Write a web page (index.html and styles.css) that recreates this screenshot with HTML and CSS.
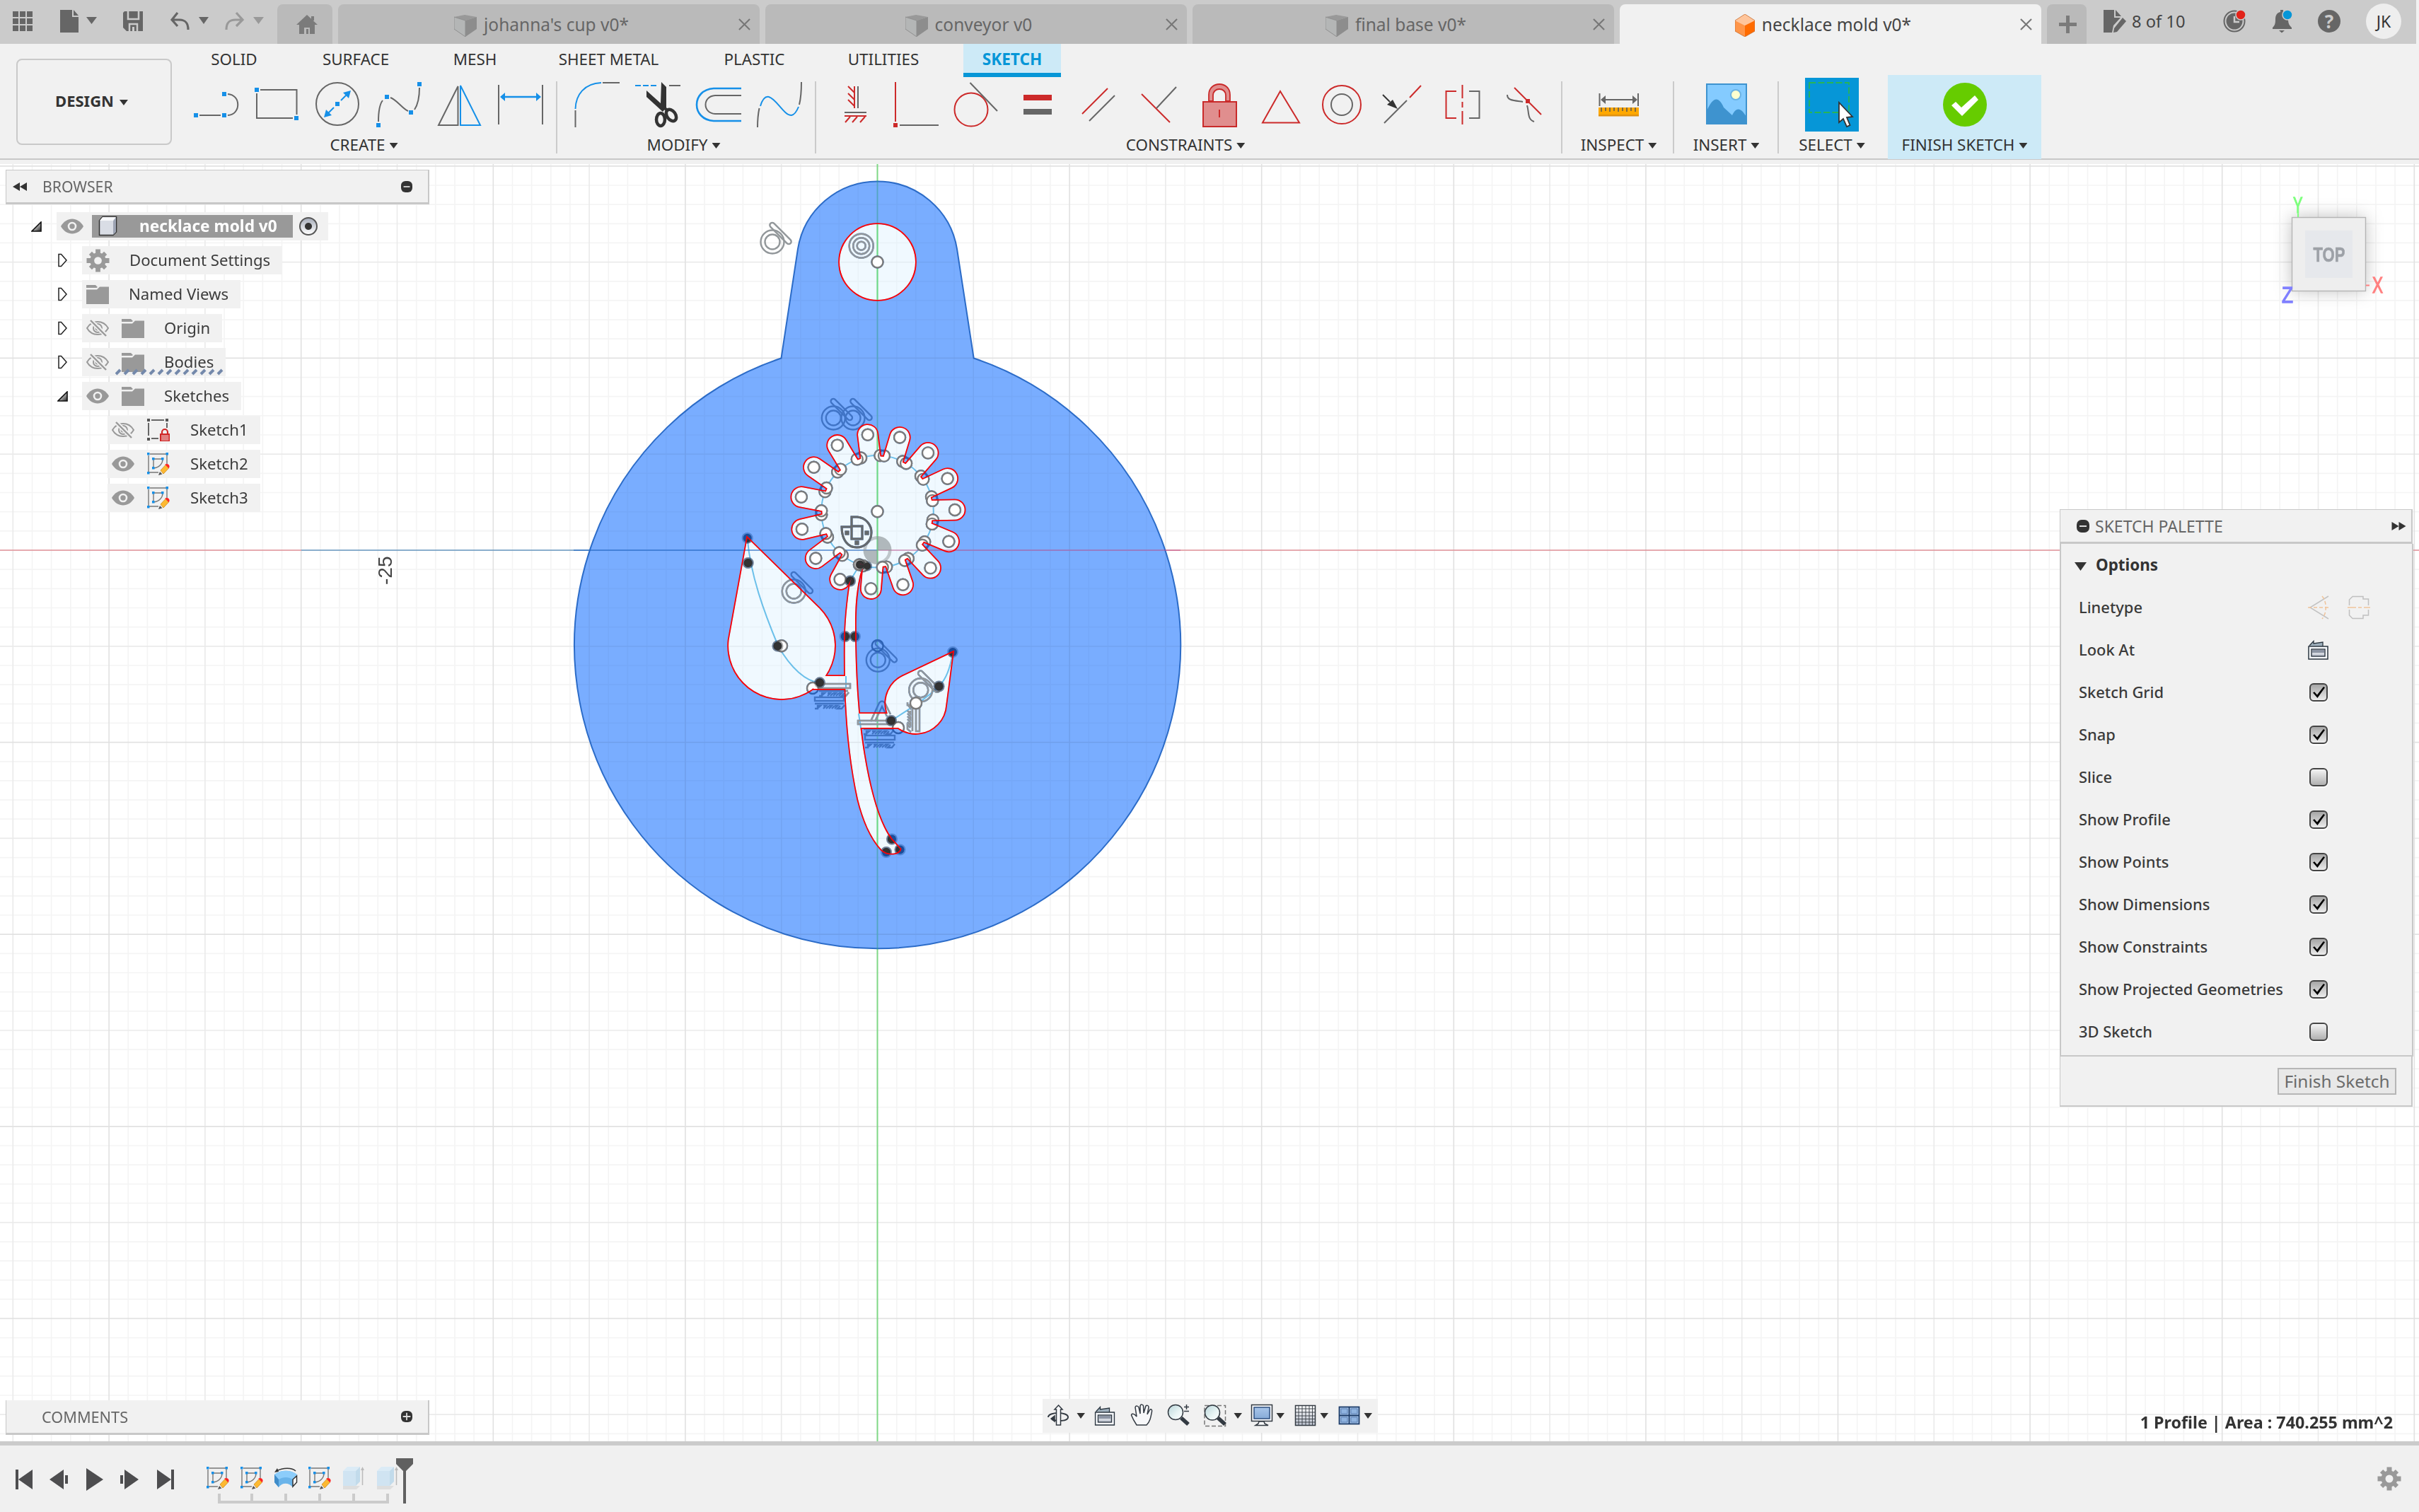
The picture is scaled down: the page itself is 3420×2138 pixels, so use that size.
FILE: index.html
```html
<!DOCTYPE html>
<html lang="en">
<head>
<meta charset="utf-8">
<title>necklace mold v0*</title>
<link rel="stylesheet" href="styles.css">
</head>
<body>
<svg class="defs" width="0" height="0" aria-hidden="true">
  <defs>
    <linearGradient id="gBox" x1="0" y1="0" x2="0" y2="1"><stop offset="0" stop-color="#fff"/><stop offset="1" stop-color="#b9bfcc"/></linearGradient>
    <linearGradient id="gTri" x1="0" y1="0" x2="1" y2="1"><stop offset=".3" stop-color="#eee"/><stop offset="1" stop-color="#222"/></linearGradient>
    <linearGradient id="gLens" x1="0" y1="0" x2="1" y2="1"><stop offset="0" stop-color="#b9d6da"/><stop offset=".6" stop-color="#eaf5f5"/><stop offset="1" stop-color="#fff"/></linearGradient>
    <linearGradient id="gBlue" x1="0" y1="0" x2="0" y2="1"><stop offset="0" stop-color="#a9c6ea"/><stop offset="1" stop-color="#86abd8"/></linearGradient>
    <symbol id="eye" viewBox="0 0 32 22"><path d="M0 11C8-3 24-3 32 11C24 25 8 25 0 11Z" fill="#999"/><circle cx="16" cy="11" r="5" fill="none" stroke="#f1f1f1" stroke-width="2.6"/></symbol>
    <symbol id="eye-off" viewBox="0 0 32 26"><g fill="none" stroke="#999" stroke-width="2"><path d="M1 13C8 1 24 1 31 13C24 25 8 25 1 13Z"/><circle cx="16" cy="13" r="6"/><circle cx="16" cy="13" r="2.5"/></g><path d="M5.5 1.500L29 24.500" stroke="#f1f1f1" stroke-width="6"/><path d="M6 2L28 24" stroke="#999" stroke-width="2.4"/></symbol>
    <symbol id="folder" viewBox="0 0 32 27"><path d="M0 0H13L16 3L14.500 4H0ZM0 6.500H15L19 2.500H32V27H0Z" fill="#999"/></symbol>
    <symbol id="gear" viewBox="-17 -17 34 34"><g fill="#999"><path d="M-3.500-16.500H3.500V16.500H-3.500Z"/><path d="M-3-15.500H3V15.500H-3Z" transform="rotate(45)"/><path d="M-3.500-16.500H3.500V16.500H-3.500Z" transform="rotate(90)"/><path d="M-3-15.500H3V15.500H-3Z" transform="rotate(135)"/><circle r="11.5"/></g><circle r="5.5" fill="#f1f1f1"/></symbol>
    <symbol id="sketch" viewBox="0 0 32 32"><g fill="none" stroke="#777" stroke-width="1.4"><path d="M2 4V28H16M4 2H28V16"/><path d="M9 10V22C17 21 22 16 22 9H9"/></g><g fill="#1690e8"><path d="M0 0h3.500v3.500H0zM26.500 0h3.500v3.500h-3.500zM0 27h3.500v3.500H0zM7 7h3.500v3.500H7zM20 7h3.500v3.500h-3.500zM7 20h3.500v3.500H7z"/></g><path d="M19 25L26 17.500L30.500 22L23 30Z" fill="#fdb931" stroke="#d89a30"/><path d="M26.500 17a3 3 0 0 1 4 4z" fill="#f22" stroke="#f22" stroke-width="1.500"/><path d="M18 27L16 32L21.500 30.500Z" fill="#555"/></symbol>
    <symbol id="sketch-lock" viewBox="0 0 32 32"><g stroke="#666" stroke-width="2"><path d="M6 2H24M2 6V24M28 6V13M6 28H16"/></g><path d="M0 0h4v4H0zM26 0h4v4h-4zM0 27h4v4H0z" fill="#555"/><path d="M21 21V19a4 4 0 0 1 8 0V21" fill="none" stroke="#d02626" stroke-width="2.200"/><path d="M19 22H31.500V32H19Z" fill="#e08080" stroke="#d02626" stroke-width="2"/></symbol>
    <symbol id="part" viewBox="0 0 32 31"><path d="M0 3L15 0L32 3L16 8Z" fill="#999"/><path d="M0 3L16 8V31L0 20Z" fill="#b4b6b6" stroke="#8f8f8f"/><path d="M16 8L32 3V20L16 31Z" fill="#8d8d8d"/></symbol>
    <symbol id="part-on" viewBox="0 0 28 32"><path d="M14 0L28 9L14 16L0 9Z" fill="#ffc59b"/><path d="M0 9L14 16V32L0 24Z" fill="#ff9548"/><path d="M28 9L14 16V32L28 24Z" fill="#ff6b00"/><path d="M14 0L28 9V24L14 32L0 24V9Z" fill="none" stroke="#c96a2b" stroke-width=".8"/></symbol>
    <symbol id="close" viewBox="0 0 18 18"><path d="M1 1L17 17M17 1L1 17" stroke="#777" stroke-width="2.200"/></symbol>
    <symbol id="look" viewBox="0 0 29 28"><path d="M2 8L8 1.500V5L21 3V9" fill="#9fb0bd" stroke="#2b3640" stroke-width="1.300"/><rect x="1" y="9" width="27" height="18" fill="#f6f8fb" stroke="#2b3640" stroke-width="1.500"/><rect x="5" y="13" width="19" height="10" fill="url(#gBox)" stroke="#2b3640" stroke-width="1.400"/><rect x="6" y="14" width="17" height="4" fill="#8d95a5"/></symbol>
    <symbol id="tri-open" viewBox="0 0 14 20"><path d="M1.500 1.500H5L12.500 10L5 18.500H1.500Z" fill="#fff" stroke="#222" stroke-width="1.500"/></symbol>
    <symbol id="tri-full" viewBox="0 0 15 15"><path d="M14 1V14H1Z" fill="url(#gTri)" stroke="#111" stroke-width="1.600"/></symbol>
    <symbol id="rew" viewBox="0 0 20 12"><path d="M10 0V12L0 6ZM20 0V12L10 6Z" fill="#333"/></symbol>
    <symbol id="pill" viewBox="0 0 18 18"><rect width="18" height="18" rx="7" fill="#333"/><path d="M4 9H14" stroke="#ddd" stroke-width="2"/></symbol>
    <symbol id="pill-plus" viewBox="0 0 18 18"><rect width="18" height="18" rx="7" fill="#333"/><path d="M3 9H15M9 3V15" stroke="#ddd" stroke-width="2"/></symbol>
  </defs>
</svg>

<header class="topbar">
  <div class="quick">
    <svg width="392" height="62" viewBox="0 0 392 62">
      <path d="M18 16h8v8h-8zm10 0h8v8h-8zm10 0h8v8h-8zM18 26h8v8h-8zm10 0h8v8h-8zm10 0h8v8h-8zM18 36h8v8h-8zm10 0h8v8h-8zm10 0h8v8h-8z" fill="#666"/>
      <path d="M85 14H102V24H111V46H85ZM104 14L111 22H104Z" fill="#666"/><path d="M122 24H137L129.500 34Z" fill="#666"/>
      <path d="M176 16H202V44H179L174 39V18Z" fill="#666"/><path d="M181 16V27H196V16M183 44V34H194V44" fill="none" stroke="#cbcbcb" stroke-width="2.500"/><path d="M187 38h3v6h-3z" fill="#cbcbcb"/>
      <path d="M251 18L243 28L251 37M243 28H253C262 28 266 32 266 42" fill="none" stroke="#666" stroke-width="3.200"/><path d="M281 24H295L288 34Z" fill="#666"/>
      <path d="M334 18L343 28L334 37M343 28H333C324 28 320 32 320 42" fill="none" stroke="#999" stroke-width="3.200"/><path d="M358 24H373L365.500 34Z" fill="#999"/>
    </svg>
  </div>
  <div class="tab home"><svg width="32" height="28" viewBox="0 0 32 28"><path d="M16 0L31 14H27V27H20V18H12V27H5V14H1ZM22 2H26V8H22Z" fill="#7b7b7b"/><path d="M15 20h3v7h-3z" fill="#7b7b7b"/></svg></div>
  <div class="tab"><div class="title"><svg width="32" height="31"><use href="#part"/></svg><span>johanna's cup v0*</span></div><svg class="x" width="17" height="17"><use href="#close"/></svg></div>
  <div class="tab"><div class="title"><svg width="32" height="31"><use href="#part"/></svg><span>conveyor v0</span></div><svg class="x" width="17" height="17"><use href="#close"/></svg></div>
  <div class="tab"><div class="title"><svg width="32" height="31"><use href="#part"/></svg><span>final base v0*</span></div><svg class="x" width="17" height="17"><use href="#close"/></svg></div>
  <div class="tab active"><div class="title"><svg width="28" height="32"><use href="#part-on"/></svg><span>necklace mold v0*</span></div><svg class="x" width="17" height="17"><use href="#close"/></svg></div>
  <div class="tab plus"><svg width="25" height="25" viewBox="0 0 25 25"><path d="M10 0h5v10h10v5H15v10h-5V15H0v-5h10z" fill="#7b7b7b"/></svg></div>
  <div class="account">
    <svg width="32" height="32" viewBox="0 0 32 32"><path d="M0 0H15V11H24L14 22L12 32H0ZM17 0L25 9H17Z" fill="#666"/><path d="M27 11L32 16L19 31L14 32L15 26Z" fill="#666"/></svg>
    <span class="count">8 of 10</span>
    <svg class="clock" width="34" height="34" viewBox="0 0 34 34"><circle cx="16" cy="17" r="14.500" fill="none" stroke="#666" stroke-width="2"/><circle cx="16" cy="17" r="11.500" fill="#666"/><path d="M16 10V18H23" fill="none" stroke="#cbcbcb" stroke-width="2.500"/><circle cx="25" cy="8" r="7" fill="#e2231a" stroke="#cbcbcb" stroke-width="1.500"/></svg>
    <svg class="bell" width="30" height="34" viewBox="0 0 30 34"><path d="M12 1H16V4C21 5 23 9 23 14C23 21 25 23 28 26V28H1V26C4 23 5 21 5 14C5 9 7 5 12 4ZM10 30H18L14 33.500Z" fill="#666"/><circle cx="22" cy="8" r="7" fill="#0696d7" stroke="#cbcbcb" stroke-width="1.500"/></svg>
    <div class="help">?</div>
    <div class="avatar">JK</div>
  </div>
</header>

<section class="ribbon">
  <button class="design">DESIGN<i class="caret"></i></button>
  <div class="rib-main">
    <nav class="rib-tabs"><span class="t1">SOLID</span><span class="t2">SURFACE</span><span class="t3">MESH</span><span class="t4">SHEET METAL</span><span class="t5">PLASTIC</span><span class="t6">UTILITIES</span><span class="t7">SKETCH</span></nav>
    <div class="groups">
      <div class="group create">
        <div class="icons">
          <svg width="79" height="76" viewBox="265 110 79 76"><path d="M282 163H312M322 133C341 134 341 162 322 163" class="k"/><path d="M274 160h6v6h-6zM314 160h6v6h-6zM314 130h6v6h-6z" class="bf"/></svg>
          <svg width="86" height="76" viewBox="344 110 86 76"><path d="M368 127H419.500V162M414 167H363V132" class="k"/><path d="M360 124h6v6h-6zM416 164h6v6h-6z" class="bf"/></svg>
          <svg width="88" height="76" viewBox="430 110 88 76"><circle cx="477" cy="147" r="30" class="k"/><path d="M462 162L472 152M482 142L492 132" class="b"/><path d="M496 128L493 139L485 131ZM458 166L461 155L469 163ZM474 144h6v6h-6z" class="bf"/></svg>
          <svg width="88" height="76" viewBox="518 110 88 76"><path d="M535 172C535 158 537 147 541 142M552 138C561 141 569 154 577 157M586 155C592 146 593 136 593 124" class="k"/><path d="M532 174h6v6h-6zM544 134h6v6h-6zM578 156h6v6h-6zM590 116h6v6h-6z" class="bf"/></svg>
          <svg width="86" height="76" viewBox="606 110 86 76"><path d="M647.500 122V177H620Z" class="k"/><path d="M651 121V177H679Z" class="b"/></svg>
          <svg width="90" height="76" viewBox="692 110 90 76"><path d="M705 120V176M767 120V176" class="k"/><path d="M710 137H762" class="b thick"/><path d="M707 137L714 131V143ZM765 137L758 131V143Z" class="bf"/></svg>
        </div>
        <div class="label">CREATE<i class="caret"></i></div>
      </div>
      <i class="sep"></i>
      <div class="group modify">
        <div class="icons">
          <svg width="90" height="76" viewBox="796 110 90 76"><path d="M813.500 180V156M852 117H876" class="k"/><path d="M813.500 154C814 134 826 118 850 117" class="b"/></svg>
          <svg width="88" height="76" viewBox="886 110 88 76"><path d="M898 121h8m3 0h8m3 0h8" class="b"/><path d="M946 121H962" class="k"/><path d="M935 116L942 123V152L937 158L914 137V128L934 146Z" fill="#333"/><g fill="none" stroke="#333" stroke-width="4.500"><ellipse cx="934" cy="169" rx="6" ry="9"/><ellipse cx="949" cy="163" rx="6" ry="9" transform="rotate(-35 949 163)"/></g><path d="M932 148L944 156" stroke="#333" stroke-width="4"/></svg>
          <svg width="86" height="76" viewBox="974 110 86 76"><path d="M1048 125H1009C977 127 977 169 1009 171H1048" class="b thick"/><path d="M1048 135H1011C993 136 993 160 1011 161H1048" class="k"/></svg>
          <svg width="90" height="76" viewBox="1060 110 90 76"><path d="M1071 180C1071 168 1072 160 1073.500 153M1130 148C1132 140 1133 128 1133 116" class="k"/><path d="M1075 150C1078 140 1082 136 1087 137C1098 140 1108 163 1119 163C1124 162 1127 156 1129 151" class="b"/></svg>
        </div>
        <div class="label">MODIFY<i class="caret"></i></div>
      </div>
      <i class="sep"></i>
      <div class="group constraints">
        <div class="icons">
          <svg width="62" height="76" viewBox="1180 110 62 76"><path d="M1214 122V153M1195 159H1226" class="k"/><path d="M1209 122V153M1200 122l9 9M1200 132l9 9M1200 141l9 9M1195 164H1226M1203 165l-7 8M1213 165l-7 8M1224 165l-7 8" class="r"/></svg>
          <svg width="98" height="76" viewBox="1242 110 98 76"><path d="M1267 116V172" class="r"/><path d="M1264 174h6v6h-6z" class="rf"/><path d="M1273 177H1328" class="k"/></svg>
          <svg width="88" height="76" viewBox="1340 110 88 76"><circle cx="1374" cy="155" r="23.500" class="r"/><path d="M1372.500 117L1411 157" class="k"/></svg>
          <svg width="84" height="76" viewBox="1428 110 84 76"><path d="M1448 134h40v8h-40z" class="rf"/><path d="M1448 154h40v8h-40z" fill="#666"/></svg>
          <svg width="84" height="76" viewBox="1512 110 84 76"><path d="M1531 161L1567 125" class="r"/><path d="M1541 171L1577 135" class="k"/></svg>
          <svg width="84" height="76" viewBox="1596 110 84 76"><path d="M1615 133L1655 173" class="r"/><path d="M1636 153L1664 123" class="k"/></svg>
          <svg width="86" height="76" viewBox="1680 110 86 76"><path d="M1710 143V134C1710 114 1740 114 1740 134V143H1734V135C1734 123 1716 123 1716 135V143Z" fill="#e08e8e" stroke="#c92a2a" stroke-width="1.800"/><rect x="1702" y="144" width="47" height="35" fill="#e08e8e" stroke="#c92a2a" stroke-width="2"/><path d="M1725 155V166" class="r"/></svg>
          <svg width="88" height="76" viewBox="1766 110 88 76"><path d="M1811 129L1838 173.500H1786Z" class="r"/></svg>
          <svg width="88" height="76" viewBox="1854 110 88 76"><circle cx="1898" cy="148" r="27" class="r"/><circle cx="1898" cy="148" r="15" class="k"/></svg>
          <svg width="84" height="76" viewBox="1942 110 84 76"><path d="M1958 174L1990 142" class="k"/><path d="M1994 138L2010 121" class="r"/><path d="M1956 134L1966 144" stroke="#333" stroke-width="2"/><path d="M1977 154L1962 148L1970 141Z" fill="#333"/></svg>
          <svg width="86" height="76" viewBox="2026 110 86 76"><path d="M2060 129H2045.500V167H2060M2068.500 120V139M2068.500 144V152M2068.500 157V176" class="r"/><path d="M2078 129H2092.500V167H2078" class="k"/></svg>
          <svg width="86" height="76" viewBox="2112 110 86 76"><path d="M2132 134C2132 142 2140 142 2154 144M2160 149C2163 158 2160 169 2170 172" class="k"/><path d="M2142 124L2180 162" class="r"/><path d="M2158 140h6v6h-6z" class="rf"/></svg>
        </div>
        <div class="label">CONSTRAINTS<i class="caret"></i></div>
      </div>
      <i class="sep"></i>
      <div class="group inspect">
        <div class="icons"><svg width="76" height="76" viewBox="2250 110 76 76"><path d="M2260.500 132V150M2315 132V150M2268 141H2308" class="k"/><path d="M2262 141L2269 135V147ZM2314 141L2307 135V147Z" fill="#666"/><path d="M2259 152h57v12h-57z" fill="#ffa800"/><path d="M2259 162h57v2.500h-57z" fill="#e09210"/><path d="M2263 152v6M2269 152v5M2275 152v6M2281 152v5M2287 152v6M2293 152v5M2299 152v6M2305 152v5M2311 152v6" stroke="#555" stroke-width="1.500"/></svg></div>
        <div class="label">INSPECT<i class="caret"></i></div>
      </div>
      <i class="sep"></i>
      <div class="group insert">
        <div class="icons"><svg width="76" height="76" viewBox="2403 110 76 76"><rect x="2413" y="119" width="56" height="56" fill="#84cbff"/><path d="M2413 157C2422 136 2430 136 2437 152L2449 163C2455 151 2461 152 2469 165V175H2413Z" fill="#3e93cf"/><circle cx="2454" cy="134" r="7" fill="#ffffcf" stroke="#6cb3e4" stroke-width="2"/><rect x="2413" y="119" width="56" height="56" fill="none" stroke="#3e93cf" stroke-width="2"/></svg></div>
        <div class="label">INSERT<i class="caret"></i></div>
      </div>
      <i class="sep"></i>
      <div class="group select">
        <div class="icons"><svg width="76" height="76" viewBox="2552 110 76 76"><rect x="2552" y="110" width="76" height="76" fill="#0696d7"/><rect x="2558" y="117" width="56" height="42" fill="none" stroke="#28b455" stroke-width="1.800" stroke-dasharray="9 3.500"/><path d="M2600 145V173L2606 168L2611 179L2615.500 177L2611 166L2619 165Z" fill="#fff" stroke="#333" stroke-width="1.800"/></svg></div>
        <div class="label">SELECT<i class="caret"></i></div>
      </div>
      <div class="group finish">
        <div class="icons"><svg width="76" height="76" viewBox="2740 110 76 76"><circle cx="2778" cy="148" r="31" fill="#66cc00"/><path d="M2759 149L2765 144L2773 152L2792 135L2797 141L2774 164Z" fill="#fff"/></svg></div>
        <div class="label">FINISH SKETCH<i class="caret"></i></div>
      </div>
    </div>
  </div>
</section>

<main class="workspace">
  <svg class="scene" width="3420" height="1806" viewBox="0 232 3420 1806">
    <defs>
      <path id="petal" d="M-13.700-60V-109.500A13.700 13.700 0 0 1 13.700-109.500V-60Z"/>
      <g id="pale">
        <circle cx="1240.500" cy="370.500" r="53.500"/>
        <g id="flower" transform="translate(1240.500 723.300)"><circle r="78"/></g>
        <path d="M1202 823C1198 850 1194.700 880 1194.700 910C1194 990 1198 1060 1213 1130C1220 1158 1230 1184 1246.700 1201.700C1256 1210 1271 1207 1272.700 1200.700L1260 1186.700C1240 1160 1228 1105 1221.700 1066.700C1214 1020 1209 960 1209 883C1209 860 1210 840 1215 816.700C1217 808 1219 803 1225 800L1212 796Z"/>
        <path d="M1150 956H1200V974H1150ZM1210 1009H1262V1029H1210Z"/>
        <path d="M1262 1009V1029H1272L1280 1009Z"/>
        <path d="M1056.700 760.700L1158.300 860.300A75 75 0 1 1 1030.500 905Z"/>
        <path d="M1347 922.500L1276.500 956A42.600 42.600 0 1 0 1337.300 997Z"/>
      </g>
      <mask id="inside" maskUnits="userSpaceOnUse" x="0" y="232" width="3420" height="1806"><use href="#pale" fill="#fff"/></mask>
      <mask id="outside" maskUnits="userSpaceOnUse" x="0" y="232" width="3420" height="1806"><path fill="#fff" d="M0 232H3420V2038H0Z"/><use href="#pale" fill="#000"/></mask>
      <g id="tangent"><circle r="16.500"/><circle r="10.500"/><rect x="-20" y="-3.500" width="40" height="7" rx="3.500" transform="translate(11.500 -12) rotate(45)"/></g>
      <path id="hatch" d="M0 0H41M0 7H4V3H8L3 7M12 7L16 3H12M20 3L16 7M20 7L24 3H20M28 3L24 7M28 7L32 3H28M36 3L32 7H38L42 2"/>
      <g id="notes">
        <g id="openPoints" class="open"></g>
        <g class="note">
          <use href="#tangent" x="1178.300" y="591"/><use href="#tangent" x="1206" y="591"/>
          <use href="#tangent" x="1122.300" y="836"/><use href="#tangent" x="1241.300" y="933.300"/><use href="#tangent" x="1301.700" y="975.700"/>
          <rect x="1158" y="967" width="44" height="6"/><use href="#hatch" x="1158" y="977"/><rect x="1152" y="986" width="41" height="5"/><use href="#hatch" x="1152" y="995"/>
          <rect x="1213" y="1019" width="46" height="5"/><use href="#hatch" x="1221" y="1031"/><rect x="1223" y="1040" width="42" height="6"/><use href="#hatch" x="1223" y="1050"/>
          <use href="#hatch" transform="translate(1290 993) rotate(90)"/><rect x="1295" y="998" width="5" height="36"/>
          <path d="M1231 1020L1243 994Q1247 989 1251 994L1259 1010M1237 1020L1247 999L1254 1013"/>
          <circle cx="1217.700" cy="347.700" r="17"/><circle cx="1217.700" cy="347.700" r="11.500"/><circle cx="1217.700" cy="347.700" r="6"/>
        </g>
        <g class="note strong">
          <path d="M1204 744V731H1212C1224 732 1232 742 1232 753C1232 766 1222 774 1211 774C1200 774 1190 765 1190 745H1204M1204 744H1219V762H1204Z"/>
          <path d="M1196 752h3v3h-3zM1224 752h3v3h-3zM1210 766h3v3h-3z"/>
        </g>
        <g class="open"><circle cx="1240.500" cy="370.500" r="8"/><circle cx="1240.500" cy="723.300" r="8"/><circle cx="1105" cy="913.300" r="8"/><circle cx="1149" cy="973" r="8"/><circle cx="1295" cy="994.300" r="8"/><circle cx="1240.700" cy="913" r="8"/><circle cx="1270" cy="1029" r="8"/></g>
        <g class="dot"><circle cx="1056.700" cy="760.700" r="6"/><circle cx="1057.700" cy="796" r="6"/><circle cx="1099.500" cy="913.500" r="6"/><circle cx="1159" cy="965.300" r="6"/><circle cx="1194.700" cy="900" r="6"/><circle cx="1209" cy="900" r="6"/><circle cx="1216" cy="798.500" r="6"/><circle cx="1226" cy="800.500" r="5"/><circle cx="1202" cy="821.500" r="6"/><circle cx="1347" cy="922" r="6"/><circle cx="1327.500" cy="970.500" r="6"/><circle cx="1260" cy="1019" r="6"/><circle cx="1261" cy="1186.500" r="6"/><circle cx="1272.500" cy="1201.500" r="6"/><circle cx="1253" cy="1205" r="6"/></g>
      </g>
    </defs>
    <g class="grid"><path id="gridMinor"/><path id="gridMajor"/><path id="gridSuper"/></g>
    <path d="M0 778H426M1240.500 778H3420" stroke="#e0525c" stroke-opacity=".42" stroke-width="2"/>
    <path d="M426 778H1240.500" stroke="#2a72b0" stroke-opacity=".5" stroke-width="2"/>
    <path d="M1240.500 232V2038" stroke="#2fd23c" stroke-opacity=".55" stroke-width="2"/>
    <path class="profile" d="M1104.500 506.500L1128 352A114 114 0 0 1 1353 352L1376.700 506.500A428.500 428.500 0 1 1 1104.500 506.500Z"/>
    <use href="#pale" fill="#f0f9ff"/>
    <g class="aux"><circle cx="1240.500" cy="723.300" r="79.300"/><path d="M1056.700 762C1061 813 1080 865 1100 913C1118 945 1140 964 1159 965.300M1347 924C1343 945 1338 960 1327.500 970.500C1309 988 1296 996 1260 1019M1196 956V974M1214 1009L1217 1029M1216 798L1202 821"/></g>
    <g id="overlay" class="grid soft"></g>
    <path d="M811 778H1240.500" stroke="#1e66c4" stroke-opacity=".55" stroke-width="2"/>
    <path d="M1240.500 778H1669" stroke="#c05090" stroke-opacity=".45" stroke-width="2"/>
    <path d="M1240.500 256V1342" stroke="#2fae8c" stroke-opacity=".42" stroke-width="2"/>
    <g mask="url(#inside)"><path d="M1240.500 256V1342" stroke="#5fe06a" stroke-opacity=".7" stroke-width="2"/></g>
    <g fill="#8e9598" fill-opacity=".65"><path d="M1240.500 778V758A20 20 0 0 1 1260.500 778ZM1240.500 778V798A20 20 0 0 1 1220.500 778Z"/><path fill-opacity=".5" d="M1240.500 758A20 20 0 0 0 1220.500 778H1225A15.500 15.500 0 0 1 1240.500 762.500ZM1240.500 798A20 20 0 0 0 1260.500 778H1256A15.500 15.500 0 0 1 1240.500 793.500Z"/></g>
    <use href="#notes" class="on-blue"/>
    <g mask="url(#inside)"><use href="#notes" class="on-pale"/></g>
    <g class="on-pale"><g class="note"><use href="#tangent" x="1092" y="342"/></g></g>
    <g mask="url(#outside)"><use href="#pale" fill="none" stroke="#ff0000" stroke-width="3.600"/></g>
    <text class="ruler" transform="translate(554 827) rotate(-90)">-25</text>

    <g class="cube">
      <rect class="shade" x="3240" y="307" width="104" height="104"/>
      <rect x="3240.500" y="307.500" width="104" height="104" fill="#eeeeee" fill-opacity=".96" stroke="#b5b5b5" stroke-width="1.400"/>
      <rect x="3259" y="326" width="67" height="67" fill="#e6e8ec"/>
      <text x="3270.500" y="370" font-size="29" font-weight="700" fill="#9da1a7" stroke="#9da1a7" stroke-width=".6" textLength="45" lengthAdjust="spacingAndGlyphs">TOP</text>
      <path d="M3249 302V307" stroke="#80ff80" stroke-width="2"/><path d="M3345 403.500H3350" stroke="#ff8080" stroke-width="2"/>
      <text x="3242" y="301" font-size="31" fill="#7dff7d" stroke="#7dff7d" stroke-width="1.300" textLength="13.500" lengthAdjust="spacingAndGlyphs">Y</text>
      <text x="3354" y="414" font-size="31" fill="#ff8080" stroke="#ff8080" stroke-width="1.300" textLength="15" lengthAdjust="spacingAndGlyphs">X</text>
      <text x="3226" y="428" font-size="31" fill="#8080ff" stroke="#8080ff" stroke-width="1.300" textLength="16" lengthAdjust="spacingAndGlyphs">Z</text>
    </g>
  </svg>

  <aside class="browser">
    <div class="panel-head"><svg width="20" height="12"><use href="#rew"/></svg><span>BROWSER</span><svg class="end" width="16" height="16" viewBox="0 0 18 18"><use href="#pill" width="18" height="18"/></svg></div>
    <div class="tree">
      <div class="row r1"><svg class="tw" width="15" height="15"><use href="#tri-full"/></svg><div class="item root"><svg width="32" height="22"><use href="#eye"/></svg><div class="pick"><svg width="27" height="30" viewBox="0 0 27 30"><path d="M1.500 7L6 1.500H25.500V23L21 27.500H1.500Z" fill="#d9dde5" stroke="#333" stroke-width="1.500"/><path d="M2 7L6 2H25L20.500 7Z" fill="#f8f9fb"/><path d="M21 7.500L25 2.500V23L21 27Z" fill="#9ea5b4"/></svg><b>necklace mold v0</b></div><span class="radio"></span></div></div>
      <div class="row"><svg class="tw" width="14" height="20"><use href="#tri-open"/></svg><div class="item"><svg width="33" height="33"><use href="#gear"/></svg><span>Document Settings</span></div></div>
      <div class="row"><svg class="tw" width="14" height="20"><use href="#tri-open"/></svg><div class="item"><svg width="32" height="27"><use href="#folder"/></svg><span>Named Views</span></div></div>
      <div class="row"><svg class="tw" width="14" height="20"><use href="#tri-open"/></svg><div class="item"><svg width="32" height="26"><use href="#eye-off"/></svg><svg width="32" height="27"><use href="#folder"/></svg><span>Origin</span></div></div>
      <div class="row"><svg class="tw" width="14" height="20"><use href="#tri-open"/></svg><div class="item bodies"><svg width="32" height="26"><use href="#eye-off"/></svg><svg width="32" height="27"><use href="#folder"/></svg><span>Bodies</span><svg class="squiggle" width="154" height="10" viewBox="0 0 154 10"><path d="M1 8l6-6m6 6l6-6m6 6l6-6m6 6l6-6m6 6l6-6m6 6l6-6m6 6l6-6m6 6l6-6m6 6l6-6m6 6l6-6m6 6l6-6m6 6l6-6m6 6l6-6" stroke="#7489ab" stroke-width="4" fill="none"/></svg></div></div>
      <div class="row"><svg class="tw" width="15" height="15"><use href="#tri-full"/></svg><div class="item"><svg width="32" height="22"><use href="#eye"/></svg><svg width="32" height="27"><use href="#folder"/></svg><span>Sketches</span></div></div>
      <div class="row leaf"><div class="item"><svg width="32" height="26"><use href="#eye-off"/></svg><svg width="32" height="32"><use href="#sketch-lock"/></svg><span>Sketch1</span></div></div>
      <div class="row leaf"><div class="item"><svg width="32" height="22"><use href="#eye"/></svg><svg width="32" height="32"><use href="#sketch"/></svg><span>Sketch2</span></div></div>
      <div class="row leaf"><div class="item"><svg width="32" height="22"><use href="#eye"/></svg><svg width="32" height="32"><use href="#sketch"/></svg><span>Sketch3</span></div></div>
    </div>
    <div class="panel-head comments"><span>COMMENTS</span><svg class="end" width="16" height="16" viewBox="0 0 18 18"><use href="#pill-plus" width="18" height="18"/></svg></div>
  </aside>

  <aside class="palette">
    <div class="pal-head"><svg width="18" height="18"><use href="#pill"/></svg><span>SKETCH PALETTE</span><svg class="ff" width="21" height="12"><use href="#rew"/></svg></div>
    <div class="pal-body">
      <div class="opt-title"><i class="caret"></i>Options</div>
      <div class="opt"><span>Linetype</span><svg width="31" height="34" viewBox="0 0 31 34"><path d="M29 1L3 17L29 33" fill="none" stroke="#c3c3c3" stroke-width="1.500"/><path d="M0 17H31" stroke="#f0c39a" stroke-width="1.500" stroke-dasharray="5 3"/><path d="M20 1C27 9 27 25 20 33" fill="none" stroke="#f0c39a" stroke-width="1.500" stroke-dasharray="5 3"/></svg><svg class="second" width="32" height="34" viewBox="0 0 32 34"><path d="M2.500 14V6L7 1.500H22V5H29.500V14M2.500 20V28L7 32.500H22V28H29.500V20" fill="none" stroke="#c0c0c0" stroke-width="1.500"/><path d="M0 17H32" stroke="#f0c39a" stroke-width="1.500" stroke-dasharray="12 3 5 3"/></svg></div>
      <div class="opt"><span>Look At</span><svg width="29" height="28"><use href="#look"/></svg></div>
      <div class="opt"><span>Sketch Grid</span><i class="cb on"></i></div>
      <div class="opt"><span>Snap</span><i class="cb on"></i></div>
      <div class="opt"><span>Slice</span><i class="cb"></i></div>
      <div class="opt"><span>Show Profile</span><i class="cb on"></i></div>
      <div class="opt"><span>Show Points</span><i class="cb on"></i></div>
      <div class="opt"><span>Show Dimensions</span><i class="cb on"></i></div>
      <div class="opt"><span>Show Constraints</span><i class="cb on"></i></div>
      <div class="opt"><span>Show Projected Geometries</span><i class="cb on"></i></div>
      <div class="opt"><span>3D Sketch</span><i class="cb"></i></div>
    </div>
    <div class="pal-foot"><button>Finish Sketch</button></div>
  </aside>

  <div class="navbar">
    <svg width="474" height="48" viewBox="1474 1978 474 48">
      <g stroke="#333a42" stroke-width="1.500" fill="#f7f8fa">
        <path d="M1482 2004C1482 1996 1510 1996 1510 2004C1510 2010 1494 2010 1487 2007" fill="none" stroke-width="2"/>
        <path d="M1496.500 1987L1502 1993H1499.500V2015H1493.500V1993H1491Z"/><path d="M1486 2006L1491 2002V2010Z" fill="#333a42"/>
        <path d="M1607 2015C1603 2009 1601 2005 1599.500 2001C1600 1998 1604 1999 1607 2003L1605 1990C1606 1987 1609 1988 1610 1990L1612 1999V1988C1613 1985 1616 1986 1616.500 1988L1617 1998L1620 1988C1622 1986 1624 1988 1624 1990L1622 2000L1626 1993C1628 1992 1629 1994 1628.500 1996C1627 2004 1626 2010 1621 2015Z"/>
        <path d="M1670 2005L1680 2014" stroke-width="5.500"/><circle cx="1662" cy="1997" r="10.500" fill="url(#gLens)"/>
        <path d="M1674 1989.500H1681M1677.500 1986V1993M1674 1995.500H1681" fill="none"/>
        <path d="M1703 1987.500H1732.500V2016.500H1703Z" fill="none" stroke="#777" stroke-dasharray="6 3"/><path d="M1722 2005L1732 2014" stroke-width="5.500"/><circle cx="1714" cy="1997.500" r="10.500" fill="url(#gLens)"/>
        <rect x="1769.500" y="1986.500" width="29" height="23"/><rect x="1773" y="1990" width="22" height="16" fill="url(#gBlue)" stroke="#2d4f80"/><path d="M1780 2010H1787L1788 2013L1793 2015.500H1775L1779 2013Z"/>
        <rect x="1831.500" y="1987.500" width="28" height="28" fill="url(#gBox)"/><path d="M1836 1988V2015M1841 1988V2015M1846 1988V2015M1851 1988V2015M1855.500 1988V2015M1832 1992H1859M1832 1997H1859M1832 2002H1859M1832 2006.500H1859M1832 2011H1859" stroke-width=".9"/>
      </g>
      <rect x="1893.500" y="1989.500" width="28" height="24" fill="#a9c6ea" stroke="#1d3c69" stroke-width="1.800"/><path d="M1907.500 1989V2014M1893 2001.500H1922" stroke="#1d3c69" stroke-width="1.800"/><path d="M1896 1992h9v7h-9zM1910 1992h9v7h-9zM1896 2004h9v7h-9zM1910 2004h9v7h-9z" fill="#90b4e0" stroke="#5a7fb3"/>
      <path d="M1522.500 1998H1534L1528 2006ZM1744.500 1998H1756L1750 2006ZM1804.500 1998H1816L1810 2006ZM1866.500 1998H1878L1872 2006ZM1928.500 1998H1940L1934 2006Z" fill="#333"/>
      <use href="#look" x="1547.500" y="1988" width="29" height="28"/>
    </svg>
  </div>
  <div class="status">1 Profile | Area : 740.255 mm^2</div>
</main>

<footer class="timeline">
  <svg width="600" height="94" viewBox="0 2044 600 94">
    <g fill="#4d4d4f"><path d="M22 2078h4v28h-4zM46 2078V2106L26 2092ZM90 2078V2106L70 2092ZM92 2086h4v12h-4zM122 2076V2108L146 2092ZM170 2086h4v12h-4zM176 2078V2106L196 2092ZM222 2078V2106L242 2092ZM242 2078h4v28h-4z"/></g>
    <use href="#sketch" x="292" y="2074" width="32" height="32"/><use href="#sketch" x="340" y="2074" width="32" height="32"/><use href="#sketch" x="436" y="2074" width="32" height="32"/>
    <path d="M388 2085C397 2078 411 2078 420 2085L414 2090V2103C408 2096 399 2096 394 2103L388 2096Z" fill="#6ab4ea"/><path d="M388 2085C397 2078 411 2078 420 2085L414 2092C408 2088 400 2088 394 2092Z" fill="#8ccdfb"/><path d="M388 2085L394 2092V2103L388 2096Z" fill="#3f8cc9"/><path d="M414 2092L419.500 2087V2096L414 2102Z" fill="#fff" stroke="#333" stroke-width="1.500"/><path d="M391 2080C400 2075 413 2075 418 2080" fill="none" stroke="#333" stroke-width="1.500"/><path d="M388 2082L392 2076L394 2081Z" fill="#333"/>
    <g id="ext"><path d="M485 2101h24l-5 5h-19z" fill="#dedede"/><path d="M485 2080H503V2101H485Z" fill="#d0e4f2"/><path d="M485 2080L491 2074H509L503 2080Z" fill="#dbebf6"/><path d="M503 2080L509 2074V2095L503 2101Z" fill="#c2dbeb"/><path d="M512.500 2100V2078" stroke="#bbb" stroke-width="1.500"/><path d="M510 2079L512.500 2074L515 2079Z" fill="#bbb"/></g>
    <use href="#ext" x="48"/>
    <path d="M310 2112V2124H548V2112M356 2112V2124M404 2112V2124M452 2112V2124M500 2112V2124" fill="none" stroke="#cbcbcb" stroke-width="4"/>
    <path d="M560 2062H584V2070L574 2080V2126H570V2080L560 2070Z" fill="#606060"/>
  </svg>
  <svg class="settings" width="34" height="34"><use href="#gear"/></svg>
</footer>
<script src="scene.js"></script>
</body>
</html>
```
FILE: styles.css
```css
*{box-sizing:border-box}
body{margin:0;width:3420px;height:2138px;overflow:hidden;background:#f1f1f1;font-family:"Noto Sans","Open Sans",sans-serif;font-size:22px;color:#333;display:flex;flex-direction:column}
svg{display:block;flex:none}
.defs{position:absolute}
button{font:inherit;color:inherit;margin:0;padding:0}
.caret{display:inline-block;width:12px;height:8px;background:#333;clip-path:polygon(0 0,100% 0,50% 100%)}

.topbar{flex:none;height:62px;width:3416px;background:#cbcbcb;display:flex;align-items:flex-end;gap:8px}
.quick{width:384px}
.tab{height:56px;width:596px;border-radius:8px 8px 0 0;background:#bababa;display:flex;align-items:center;padding:0 13px 0 9px;font-size:24.500px;color:#666}
.tab .title{flex:1;display:flex;align-items:center;justify-content:center;gap:10px}
.tab span{line-height:30px;padding-top:2px}
.tab .title svg{margin-top:4px}
.tab .x{margin-top:1px}
.tab.active{background:#f1f1f1;color:#444}
.tab.home{width:78px;padding:2px 0 0 26px}
.tab.plus{width:56px;padding:0 0 0 17px}
.account{height:62px;padding:0 0 2px 16px;display:flex;align-items:center}
.count{margin-left:8px;width:129px;font-size:23.700px;color:#444}
.clock{margin-right:35px}
.bell{margin-right:35px}
.help{width:32px;height:32px;border-radius:50%;background:#666;color:#cbcbcb;font-weight:700;font-size:26px;line-height:32px;text-align:center}
.avatar{width:50px;height:50px;margin-left:36px;border-radius:50%;background:#eee;color:#333;text-align:center;line-height:50px;font-size:23px}

.ribbon{flex:none;height:164px;border-bottom:2px solid #c8c8c8;display:flex}
.design{margin:21px 0 0 23px;width:220px;height:122px;border:2px solid #c9c9c9;border-radius:8px;background:none;font-weight:700;font-size:22px;padding:0 7px 4px 0}
.design .caret{margin-left:8px;vertical-align:2px}
.rib-main{flex:1}
.rib-tabs{height:44px;margin-left:11px;display:flex;font-size:22.400px;line-height:43px;text-align:center}
.t1{width:154px}.t2{width:190px}.t3{width:147px}.t4{width:231px}.t5{width:181px}.t6{width:184px}
.t7{width:138px;height:47px;margin-left:21px;background:#cdeaf7;border-bottom:6px solid #0696d7;color:#0696d7;font-weight:700;font-size:22.600px}
.groups{height:118px;display:flex;align-items:flex-start}
.group{height:118px;padding-top:4px}
.icons{height:76px;display:flex}
.label{margin-top:3px;height:32px;line-height:32px;text-align:center;font-size:22.400px;white-space:nowrap}
.label .caret{margin-left:6px;vertical-align:3px}
.sep{flex:none;width:3px;height:102px;margin-top:9px;background:#cbcbcb;border-right:1px solid #f1f1f1}
.create{width:543px}.create .icons{margin-left:22px}
.modify{width:363px}.modify .icons{margin-left:7px}.modify .label{padding-right:8px}
.constraints{width:1052px}.constraints .icons{margin-left:24px}.constraints .label{padding-right:10px}
.inspect{width:155px}.insert{width:145px}.select{width:153px;padding-right:5px}.finish{width:217px;background:#cdeaf7;height:119px}
.inspect{padding-left:2px}
.inspect .icons,.insert .icons,.select .icons,.finish .icons{justify-content:center}
.icons .k{fill:none;stroke:#666;stroke-width:2}
.icons .b{fill:none;stroke:#1690e8;stroke-width:2}
.icons .thick{stroke-width:2.600}
.icons .bf{fill:#1690e8}
.icons .r{fill:none;stroke:#cc2a2a;stroke-width:2}
.icons .rf{fill:#cc2a2a}

.workspace{position:relative;flex:none;height:1806px;margin-top:6px;background:#fff}
.scene{position:absolute;inset:0}
.grid{stroke:#000;stroke-opacity:.043;stroke-width:1.700}
#gridMajor{stroke-opacity:.04}
#gridSuper{stroke-opacity:.035}
.soft{opacity:.65}
.profile{fill:#79adff;stroke:#2c6cc8;stroke-width:2}
.aux{fill:none;stroke:#6cc0ea;stroke-width:2}
.on-blue{--ink:#2d62b4;--fill:transparent;--note:#4074c6;--strong:#2d5ca8;--dot:#1a4d9c}
.on-pale{--ink:#7c7c7c;--fill:#fff;--note:#92979a;--strong:#666a6c;--dot:#333}
.open{fill:var(--fill);stroke:var(--ink);stroke-width:2.400}
.note{fill:none;stroke:var(--note);stroke-width:2.400}
.strong{stroke:var(--strong);stroke-width:3}
.dot{fill:var(--dot);stroke:var(--dot);stroke-opacity:.4;stroke-width:4}
.ruler{font:28px "Liberation Sans",sans-serif;fill:#444}
.cube{font-family:"Liberation Sans",sans-serif}
.shade{fill:#ddd;filter:drop-shadow(0 0 12px rgba(0,0,0,.25))}

.browser{position:absolute;left:8px;top:8px;bottom:9px;width:599px;display:flex;flex-direction:column}
.panel-head{height:49px;border:1px solid #c8c8c8;border-right-width:2px;border-bottom-width:3px;background:#f1f1f1;display:flex;align-items:center;padding:0 22px 0 9px;color:#666;font-size:21.200px}
.panel-head span{margin-left:22px}
.panel-head .end{margin-left:auto}
.panel-head.comments{margin-top:auto;border-top:0;padding-left:28px;font-size:21.700px}
.tree{padding-top:11px;color:#3c3c3c}
.row{height:40px;margin-bottom:8px;display:flex;align-items:center;padding-left:73px}
.tw{width:15px;margin-right:20px}
.row.r1{padding-left:36px}.r1 .tw{margin-right:21px}
.item{height:40px;background:#f1f1f1;display:flex;align-items:center;padding:0 17px 0 6px;font-size:22.200px}
.item svg+svg{margin-left:18px}
.item span{margin:-2px 0 0 28px}
.item.root{width:384px;padding-right:0}
.pick{width:284px;height:32px;margin-left:12px;background:#999;color:#fff;display:flex;align-items:center;padding-left:9px}
.pick b{margin:-1px 0 0 31px;font-size:22.700px}
.item .radio{width:26px;height:26px;margin:-1px 0 0 9px;border-radius:50%;border:2px solid #555;background:radial-gradient(circle,#333 0 4.500px,transparent 5.500px),linear-gradient(#a8aebb,#fff)}
.row.leaf{padding-left:144px}
.row.leaf span{margin-left:29px}
.bodies{position:relative}
.squiggle{position:absolute;left:47px;bottom:1px}
.item svg.squiggle{margin:0}

.palette{position:absolute;left:2912px;top:488px;width:500px;font-weight:500}
.pal-head{width:499px;height:49px;border:1px solid #c8c8c8;border-right-width:2px;border-bottom-width:3px;background:#f1f1f1;display:flex;align-items:center;padding:0 7px 0 23px;font-size:23px;color:#666;font-weight:400}
.pal-head span{margin-left:8px}
.ff{margin-left:auto;transform:scaleX(-1)}
.pal-body{height:725px;border:2px solid #c8c8c8;border-top:0;background:#f1f1f1}
.opt-title{height:60px;line-height:60px;font-weight:700;font-size:22.400px;padding-left:19px}
.opt-title .caret{width:17px;height:12px;margin-right:13px}
.opt{height:60px;display:flex;align-items:center;padding-left:25px;font-size:21.900px;color:#3a3a3a}
.opt span{width:326px;margin-top:-1px}
.opt svg{margin-left:-2px}
.opt svg.second{margin-left:25px}
.cb{width:26px;height:26px;border:2px solid #444;border-radius:6px;background:linear-gradient(#f4f4f4,#b0b0b0);box-shadow:0 2px 1px #fff}
.cb.on{background:linear-gradient(#a6a6a6,#ececec);position:relative}
.cb.on::after{content:"";position:absolute;left:3px;top:3px;width:17px;height:16px;background:#000;clip-path:polygon(0 53%,13% 45%,35% 72%,88% 0,100% 8%,38% 100%)}
.pal-foot{height:71px;width:499px;border:1px solid #c8c8c8;border-top:0;border-right-width:2px;border-bottom-width:2px;background:#f1f1f1;padding:16px 0 0 307px}
.pal-foot button{display:block;width:168px;height:38px;border:2px solid #b6b6b6;background:#e8e8e8;color:#6b6b6b;font-size:24.400px;line-height:32px;font-weight:400;white-space:nowrap}

.navbar{position:absolute;left:1474px;top:1746px;width:474px;height:48px;background:#f1f1f1}
.status{position:absolute;right:37px;bottom:10px;font-weight:700;font-size:23.300px;line-height:34px;white-space:pre}

.timeline{flex:none;height:100px;border-top:6px solid #cbcbcb;background:#f0f0f0;display:flex;align-items:center;justify-content:space-between}
.settings{margin-right:25px}
```
FILE: scene.js
```
// Sketch grid: a minor line every millimetre, stronger every 5 and 10.
const step = 27.16, ox = 1240.5, oy = 778;

// Lines inside the given box, keeping every n-th one.
function lines(n, x0, y0, x1, y1) {
  let d = '';
  for (let i = -60; i <= 100; i++) {
    if (i % n) continue;
    const x = ox + i * step, y = oy + i * step;
    if (x > x0 && x < x1) d += `M${x.toFixed(1)} ${y0}V${y1}`;
    if (y > y0 && y < y1) d += `M${x0} ${y.toFixed(1)}H${x1}`;
  }
  return d;
}
document.getElementById('gridMinor').setAttribute('d', lines(1, 0, 232, 3420, 2038));
document.getElementById('gridMajor').setAttribute('d', lines(5, 0, 232, 3420, 2038));
document.getElementById('gridSuper').setAttribute('d', lines(10, 0, 232, 3420, 2038));

const NS = 'http://www.w3.org/2000/svg';

// The grid shows faintly through the filled profile.
const profile = document.querySelector('.profile');
const clip = document.createElementNS(NS, 'clipPath');
clip.id = 'profileClip';
clip.appendChild(profile.cloneNode());
document.querySelector('.scene defs').appendChild(clip);
const overlay = document.getElementById('overlay');
overlay.setAttribute('clip-path', 'url(#profileClip)');
for (const n of [1, 5, 10]) {
  const p = document.createElementNS(NS, 'path');
  p.setAttribute('d', lines(n, 800, 250, 1680, 1350));
  overlay.appendChild(p);
}

// Fifteen petals round the flower, with a point at each corner and cap centre.
const flower = document.getElementById('flower');
const points = document.getElementById('openPoints');
const addPoint = (deg, r) => {
  const a = deg * Math.PI / 180;
  const c = document.createElementNS(NS, 'circle');
  c.setAttribute('cx', (1240.5 + r * Math.sin(a)).toFixed(1));
  c.setAttribute('cy', (723.3 - r * Math.cos(a)).toFixed(1));
  c.setAttribute('r', 8);
  points.appendChild(c);
};
for (let i = 0; i < 15; i++) {
  const deg = -7.2 + i * 24;
  const p = document.createElementNS(NS, 'use');
  p.setAttribute('href', '#petal');
  p.setAttribute('transform', `rotate(${deg})`);
  flower.appendChild(p);
  addPoint(deg - 10, 79.3);
  addPoint(deg + 10, 79.3);
  addPoint(deg, 109.5);
}
```
